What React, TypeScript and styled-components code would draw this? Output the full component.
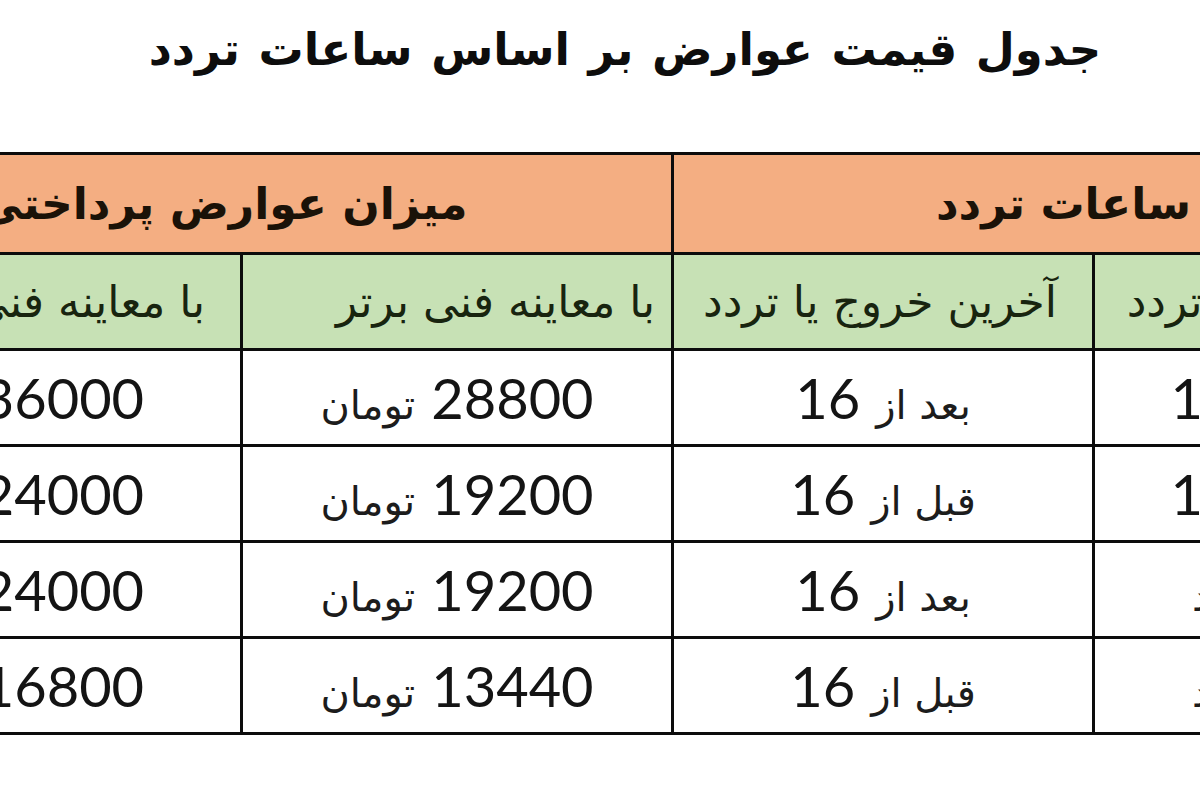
import React from "react";
import styled, { createGlobalStyle } from "styled-components";

const Global = createGlobalStyle`
  html, body { margin: 0; padding: 0; background: #fff; }
  body {
    width: 1200px;
    height: 800px;
    overflow: hidden;
    font-family: Lato, "DejaVu Sans", sans-serif;
    color: #141414;
  }
`;

const Page = styled.div`
  width: 1200px;
  height: 800px;
  overflow: hidden;
  background: #fff;
  display: flex;
  flex-direction: column;
`;

const Title = styled.h1`
  margin: 0;
  height: 152px;
  box-sizing: border-box;
  padding: 16px 0 0 50px;
  direction: rtl;
  text-align: center;
  font-family: "DejaVu Sans", sans-serif;
  font-weight: 700;
  font-size: 45px;
  line-height: 68px;
  word-spacing: 3px;
  color: #0d0d0d;
`;

const Table = styled.div`
  direction: rtl;
  display: grid;
  grid-template-columns: 418px 418px 428px 465px;
  grid-template-rows: 97px 93px repeat(4, 93px);
  gap: 3px;
  padding: 3px;
  box-sizing: border-box;
  width: 1744px;
  flex-shrink: 0;
  margin-left: -228px;
  background: #0c0c0c;
`;

type Tone = "orange" | "green" | "white";

const toneBg: Record<Tone, string> = {
  orange: "#f4ae82",
  green: "#c7e1b5",
  white: "#ffffff",
};

const Cell = styled.div<{ $tone: Tone; $span?: number; $start?: boolean; $pr?: number; $pl?: number }>`
  grid-column: span ${(p) => p.$span ?? 1};
  background: ${(p) => toneBg[p.$tone]};
  display: flex;
  align-items: center;
  justify-content: ${(p) => (p.$start ? "flex-start" : "center")};
  padding-right: ${(p) => p.$pr ?? 0}px;
  padding-left: ${(p) => p.$pl ?? 0}px;
  overflow: hidden;
  white-space: nowrap;
`;

const BandTitle = styled.span`
  font-family: "DejaVu Sans", sans-serif;
  font-weight: 700;
  font-size: 44px;
  color: #1a1208;
`;

const HeadLabel = styled.span`
  font-family: "DejaVu Sans", sans-serif;
  font-size: 44px;
  color: #18240f;
`;

const Value = styled.span`
  display: inline-flex;
  align-items: baseline;
  gap: 16px;
`;

const Num = styled.span`
  font-family: Lato, "Liberation Sans", sans-serif;
  font-size: 56px;
  color: #141414;
`;

const Word = styled.span`
  font-family: "DejaVu Sans", sans-serif;
  font-size: 40px;
  color: #1c1c1c;
`;

type Row = {
  entry: [string, string, string];
  exit: string;
  premium: string;
  regular: string;
};

const rows: Row[] = [
  { entry: ["قبل از ساعت", "10", ""], exit: "بعد از", premium: "28800", regular: "36000" },
  { entry: ["قبل از ساعت", "10", ""], exit: "قبل از", premium: "19200", regular: "24000" },
  { entry: ["از", "10", "به بعد"], exit: "بعد از", premium: "19200", regular: "24000" },
  { entry: ["از", "10", "به بعد"], exit: "قبل از", premium: "13440", regular: "16800" },
];

export default function App() {
  return (
    <Page>
      <Global />
      <Title>جدول قیمت عوارض بر اساس ساعات تردد</Title>
      <Table>
        <Cell $tone="orange" $span={2} $pr={60}>
          <BandTitle>ساعات تردد</BandTitle>
        </Cell>
        <Cell $tone="orange" $span={2}>
          <BandTitle>میزان عوارض پرداختی</BandTitle>
        </Cell>

        <Cell $tone="green" $start $pr={66}>
          <HeadLabel>اولین ورود یا تردد</HeadLabel>
        </Cell>
        <Cell $tone="green" $start $pr={35}>
          <HeadLabel>آخرین خروج یا تردد</HeadLabel>
        </Cell>
        <Cell $tone="green" $start $pr={16}>
          <HeadLabel>با معاینه فنی برتر</HeadLabel>
        </Cell>
        <Cell $tone="green" $start $pr={35}>
          <HeadLabel>با معاینه فنی عادی</HeadLabel>
        </Cell>

        {rows.map((r, i) => (
          <React.Fragment key={i}>
            <Cell $tone="white" $pl={r.entry[2] ? 0 : 40}>
              <Value>
                <Word>{r.entry[0]}</Word>
                <Num>{r.entry[1]}</Num>
                {r.entry[2] && <Word>{r.entry[2]}</Word>}
              </Value>
            </Cell>
            <Cell $tone="white">
              <Value>
                <Word>{r.exit}</Word>
                <Num>16</Num>
              </Value>
            </Cell>
            <Cell $tone="white">
              <Value>
                <Num>{r.premium}</Num>
                <Word>تومان</Word>
              </Value>
            </Cell>
            <Cell $tone="white">
              <Value>
                <Num>{r.regular}</Num>
                <Word>تومان</Word>
              </Value>
            </Cell>
          </React.Fragment>
        ))}
      </Table>
    </Page>
  );
}
